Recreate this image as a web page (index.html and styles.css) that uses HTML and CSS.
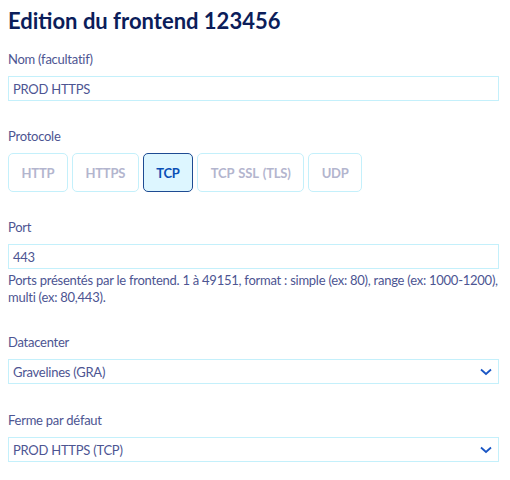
FILE: index.html
```html
<!DOCTYPE html>
<html lang="fr">
<head>
<meta charset="utf-8">
<link rel="stylesheet" href="styles.css">
</head>
<body>
<h1 class="title">Edition du frontend 123456</h1>

<div class="field first">
  <label class="label">Nom (facultatif)</label>
  <div class="input">PROD HTTPS</div>
</div>

<div class="field">
  <label class="label">Protocole</label>
  <div class="tiles">
    <div class="tile">HTTP</div>
    <div class="tile">HTTPS</div>
    <div class="tile active">TCP</div>
    <div class="tile">TCP SSL (TLS)</div>
    <div class="tile">UDP</div>
  </div>
</div>

<div class="field">
  <label class="label">Port</label>
  <div class="input">443</div>
  <p class="help">Ports présentés par le frontend. 1 à 49151, format : simple (ex: 80), range (ex: 1000-1200), multi (ex: 80,443).</p>
</div>

<div class="field">
  <label class="label">Datacenter</label>
  <div class="input select">Gravelines (GRA)
    <svg class="chev" width="12" height="8" viewBox="0 0 12 8"><path d="M1 1.5 L6 6 L11 1.5" fill="none" stroke="#1a56c4" stroke-width="1.8"/></svg>
  </div>
</div>

<div class="field last">
  <label class="label">Ferme par défaut</label>
  <div class="input select">PROD HTTPS (TCP)
    <svg class="chev" width="12" height="8" viewBox="0 0 12 8"><path d="M1 1.5 L6 6 L11 1.5" fill="none" stroke="#1a56c4" stroke-width="1.8"/></svg>
  </div>
</div>
</body>
</html>
```

FILE: styles.css
```css
body {
  margin: 0;
  padding: 0 11px 0 8px;
  font-family: "Lato", "Noto Sans", sans-serif;
  font-size: 13px;
  letter-spacing: -0.25px;
  color: #4d5592;
  background: #fff;
}
.title {
  margin: 7px 0 0;
  font-size: 22px;
  line-height: 28px;
  font-weight: 700;
  letter-spacing: 0;
  color: #0b1d5a;
}
.field {
  display: flex;
  flex-direction: column;
  margin-top: 26px;
}
.field.first {
  margin-top: 15px;
}
.field.last {
  margin-top: 27px;
}
.label {
  line-height: 18px;
  margin-bottom: 8px;
}
.input {
  height: 25px;
  box-sizing: border-box;
  border: 1px solid #c4f0fb;
  padding: 0 4px;
  display: flex;
  align-items: center;
  color: #4d5592;
}
.select {
  justify-content: space-between;
  padding-right: 6px;
}
.tiles {
  display: flex;
  gap: 4px;
}
.tile {
  height: 39px;
  box-sizing: border-box;
  border: 1px solid #c4f0fb;
  border-radius: 5px;
  padding: 0 12.5px;
  display: flex;
  align-items: center;
  font-weight: 700;
  letter-spacing: -0.2px;
  word-spacing: 1.5px;
  color: #b3b5ce;
}
.tile.active {
  border-color: #1e4b92;
  background: #ddf6ff;
  color: #0a4fb5;
}
.help {
  margin: 3px 0 1px;
  line-height: 17px;
}
```
